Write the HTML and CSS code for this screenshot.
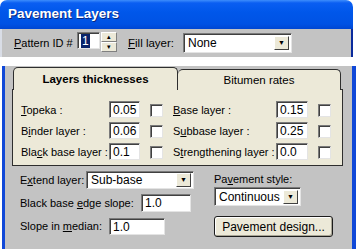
FILE: index.html
```html
<!DOCTYPE html>
<html lang="en">
<head>
  <meta charset="UTF-8">
  <title>Pavement Layers</title>
  <link rel="stylesheet" href="styles.css">
</head>
<body>

  <div class="top">
    <div class="titlebar">Pavement Layers</div>
    <div class="toolbar">
      <span class="lbl lbl-pattern"><u>P</u>attern ID #</span>
      <div class="spin">
        <div class="field spin-field"><span class="sel">1</span></div>
        <div class="spin-btns">
          <span class="spin-btn">&#9652;</span>
          <span class="spin-btn">&#9662;</span>
        </div>
      </div>
      <span class="lbl lbl-fill"><u>F</u>ill layer:</span>
      <div class="combo combo-fill">
        <span class="combo-text">None</span>
        <span class="drop">&#9660;</span>
      </div>
    </div>
  </div>

  <div class="win">
    <div class="tabs">
      <div class="tab tab-active">Layers thicknesses</div>
      <div class="tab tab-other">Bitumen rates</div>
    </div>
    <div class="panel">
      <span class="lbl"><u>T</u>opeka :</span>
      <div class="field">0.05</div>
      <div class="check"></div>
      <span class="lbl"><u>B</u>ase layer :</span>
      <div class="field">0.15</div>
      <div class="check"></div>

      <span class="lbl">B<u>i</u>nder layer :</span>
      <div class="field">0.06</div>
      <div class="check"></div>
      <span class="lbl">S<u>u</u>bbase layer :</span>
      <div class="field">0.25</div>
      <div class="check"></div>

      <span class="lbl">Bla<u>c</u>k base layer :</span>
      <div class="field">0.1</div>
      <div class="check"></div>
      <span class="lbl">S<u>t</u>rengthening layer :</span>
      <div class="field">0.0</div>
      <div class="check"></div>
    </div>

    <div class="lower">
      <div class="col-left">
        <div class="row">
          <span class="lbl lbl-extend">E<u>x</u>tend layer:</span>
          <div class="combo combo-extend">
            <span class="combo-text">Sub-base</span>
            <span class="drop">&#9660;</span>
          </div>
        </div>
        <div class="row">
          <span class="lbl lbl-edge">Black base <u>e</u>dge slope:</span>
          <div class="field field-edge">1.0</div>
        </div>
        <div class="row">
          <span class="lbl lbl-median">Slope in <u>m</u>edian:</span>
          <div class="field field-median">1.0</div>
        </div>
      </div>
      <div class="col-right">
        <span class="lbl">Pa<u>v</u>ement style:</span>
        <div class="combo combo-style">
          <span class="combo-text">Continuous</span>
          <span class="drop">&#9660;</span>
        </div>
        <button class="btn">Pavement design...</button>
      </div>
    </div>
  </div>

</body>
</html>
```

FILE: styles.css
```css
body {
  margin: 0;
  width: 356px;
  height: 249px;
  overflow: hidden;
  background: #fff;
  font-family: 'Liberation Sans', Arial, sans-serif;
  font-size: 11px;
  color: #000;
}

u {
  text-decoration: underline;
  text-underline-offset: 1px;
}

/* top window: title + pattern row */
.top {
  width: 353px;
}

.titlebar {
  height: 29px;
  box-sizing: border-box;
  padding: 6px 0 0 8px;
  border-radius: 7px 7px 0 0;
  background: linear-gradient(#3d8dfc 0, #0a5ef2 3px, #0057ea 12px, #0052e4 24px, #0046d2 29px);
  color: #fff;
  font-weight: bold;
  font-size: 13.5px;
  text-shadow: 1px 1px #0a2a80;
}

.toolbar {
  height: 28px;
  box-sizing: border-box;
  display: flex;
  align-items: center;
  background: #c3c3c3;
  border-left: 2px solid #d9dde6;
  border-right: 2px solid #0a2a9c;
  padding-left: 12px;
}

.lbl {
  white-space: nowrap;
}

.lbl-pattern {
  width: 63px;
  font-size: 11px;
}

.lbl-fill {
  width: 55px;
  margin-left: 11px;
  font-size: 11.5px;
}

.spin {
  display: flex;
  height: 20px;
  margin-top: -2px;
}

.spin-field {
  width: 23px;
  height: 20px;
  padding-left: 3px;
}

.sel {
  background: #0a246a;
  color: #fff;
  padding: 0 1px;
}

.spin-btns {
  display: flex;
  flex-direction: column;
  width: 16px;
  margin-left: 1px;
}

.spin-btn {
  flex: 1;
  background: #ece9d8;
  border: 1px solid;
  border-color: #fff #808080 #808080 #fff;
  font-size: 7px;
  line-height: 8px;
  text-align: center;
}

/* sunken white boxes */
.field {
  box-sizing: border-box;
  height: 17px;
  background: #fff;
  border: 1px solid;
  border-color: #7a7a7a #e4e4e4 #e4e4e4 #7a7a7a;
  box-shadow: inset 1px 1px #404040;
  padding: 1px 0 0 3px;
  font-size: 12px;
  line-height: 14px;
}

.check {
  box-sizing: border-box;
  width: 13px;
  height: 13px;
  margin-top: 2px;
  background: #fff;
  border: 1px solid;
  border-color: #7a7a7a #e4e4e4 #e4e4e4 #7a7a7a;
  box-shadow: inset 1px 1px #404040;
}

.combo {
  box-sizing: border-box;
  display: flex;
  align-items: center;
  background: #fff;
  border: 1px solid;
  border-color: #7a7a7a #e4e4e4 #e4e4e4 #7a7a7a;
  box-shadow: inset 1px 1px #404040;
  padding: 0 2px 0 4px;
  font-size: 12px;
}

.combo-text {
  flex: 1;
}

.drop {
  width: 15px;
  height: 14px;
  box-sizing: border-box;
  background: #ece9d8;
  border: 1px solid;
  border-color: #fff #404040 #404040 #fff;
  font-size: 7px;
  line-height: 12px;
  text-align: center;
}

.combo-fill {
  width: 109px;
  height: 20px;
  margin-top: -1px;
}

/* lower window */
.win {
  margin-top: 9px;
  margin-left: 2px;
  width: 354px;
  height: 183px;
  box-sizing: border-box;
  background: #c3c3c3;
  border-left: 3px solid #1048d8;
  border-right: 4px solid #1048d8;
  padding-top: 1px;
}

.tabs {
  display: flex;
  align-items: flex-end;
  height: 23px;
  margin-left: 8px;
  position: relative;
  z-index: 1;
}

.tab {
  box-sizing: border-box;
  background: #ece9d8;
  border: 1px solid #2e2e2e;
  border-radius: 5px 5px 0 0;
  text-align: center;
}

.tab-active {
  width: 165px;
  height: 23px;
  border-bottom: none;
  padding-top: 5px;
  font-weight: bold;
  font-size: 11.5px;
}

.tab-other {
  width: 163px;
  height: 21px;
  border-left: none;
  border-bottom: none;
  padding-top: 4px;
  font-size: 11.5px;
}

.panel {
  margin-left: 7px;
  width: 331px;
  height: 77px;
  box-sizing: border-box;
  margin-top: -1px;
  background: #ece9d8;
  border: 1px solid #2e2e2e;
  padding: 11px 0 0 8px;
  display: grid;
  grid-template-columns: 78px 31px 13px 93px 32px 13px;
  grid-auto-rows: 17px;
  column-gap: 10px;
  row-gap: 4px;
  align-items: center;
  font-size: 11px;
}

.lower {
  display: flex;
  padding: 5px 0 0 15px;
  font-size: 11px;
}

.col-left {
  width: 194px;
  display: flex;
  flex-direction: column;
  gap: 5px;
}

.row {
  display: flex;
  align-items: center;
  height: 18px;
}

.row .lbl {
  flex: none;
}

.lbl-extend {
  width: 66px;
}

.lbl-edge {
  width: 121px;
}

.lbl-median {
  width: 89px;
}

.combo-extend {
  width: 108px;
  height: 18px;
}

.field-edge {
  width: 50px;
  height: 18px;
}

.field-median {
  width: 56px;
  height: 17px;
}

.col-right {
  display: flex;
  flex-direction: column;
  align-items: flex-start;
  padding-top: 2px;
}

.combo-style {
  width: 87px;
  height: 19px;
  margin-top: 2px;
}

.btn {
  margin-top: 10px;
  width: 119px;
  height: 21px;
  background: #ece9d8;
  border: 1px solid #1c1c1c;
  border-radius: 3px;
  box-shadow: inset -1px -1px #a8a596, inset 1px 1px #fff;
  font-family: 'Liberation Sans', Arial, sans-serif;
  font-size: 12px;
  padding: 0;
}
```
